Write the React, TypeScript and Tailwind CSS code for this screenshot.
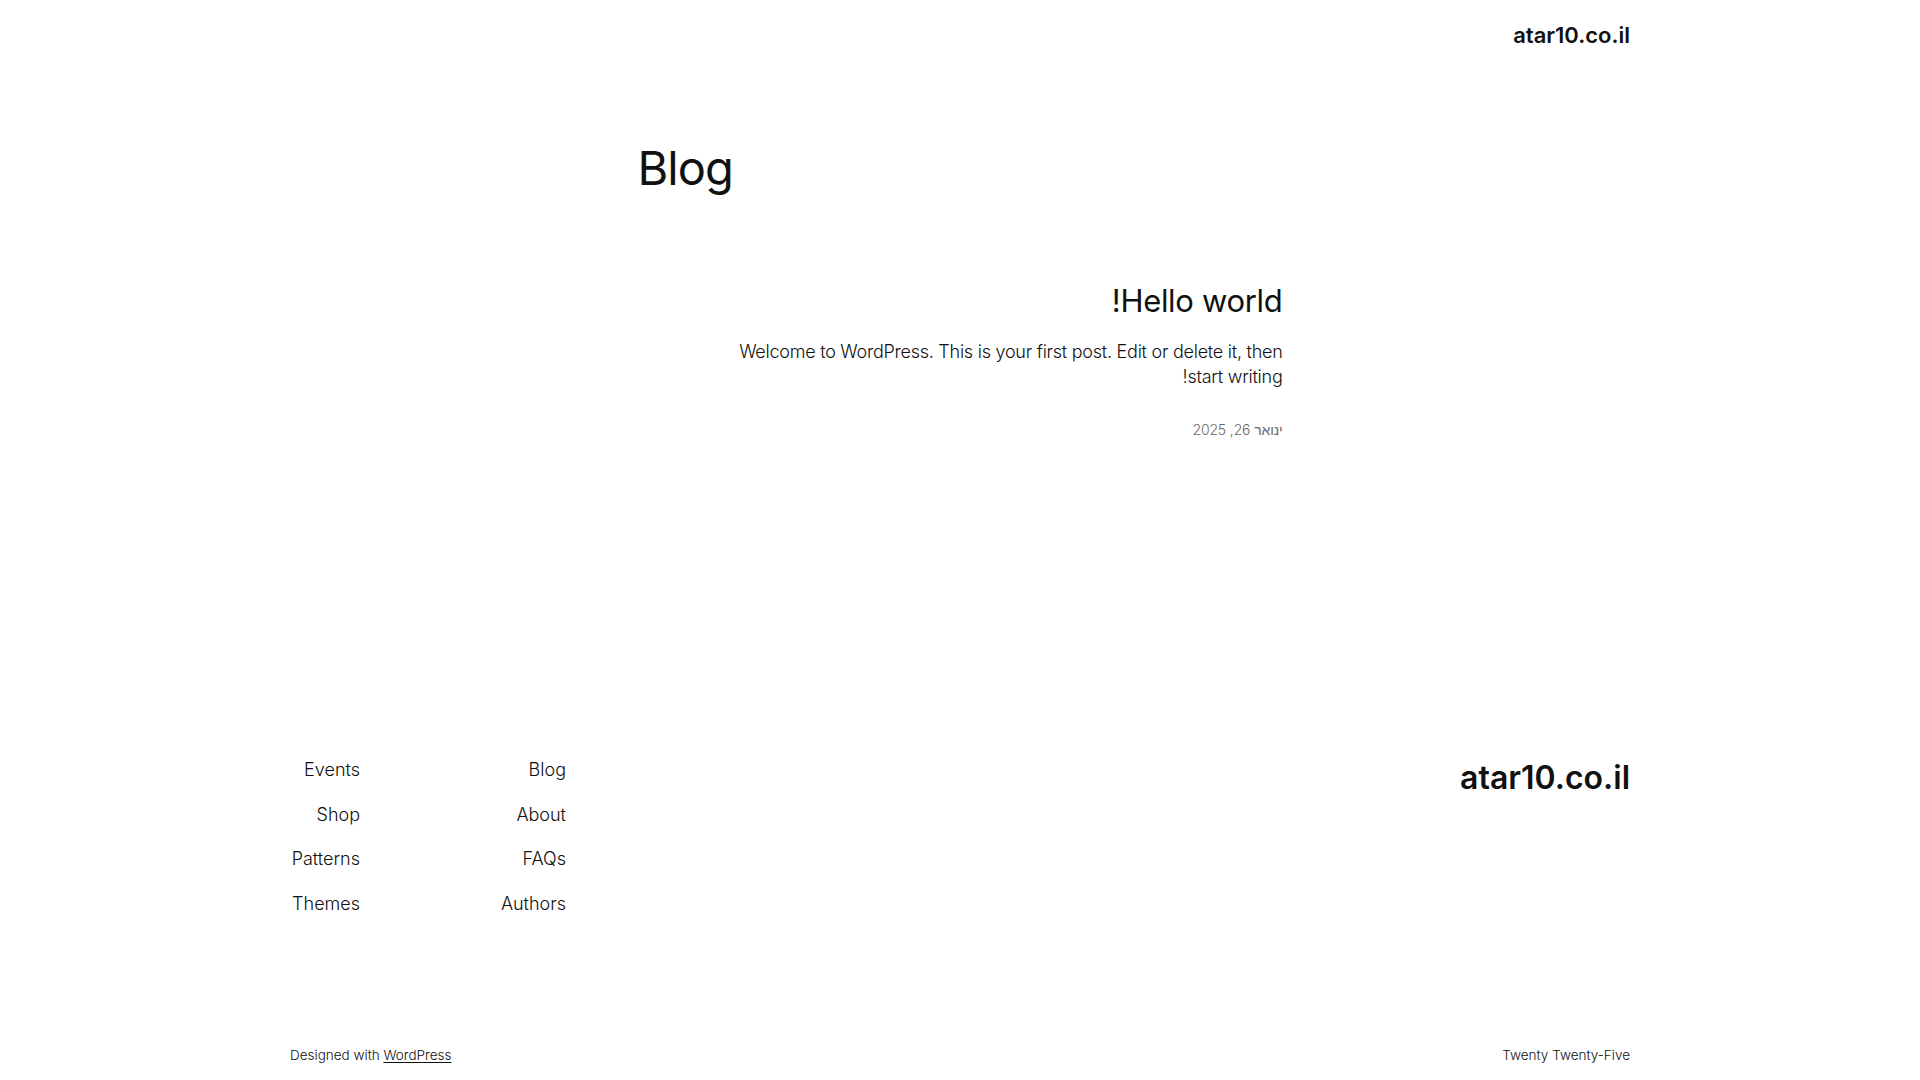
const navRight = ["Blog", "About", "FAQs", "Authors"];
const navLeft = ["Events", "Shop", "Patterns", "Themes"];

function NavColumn({ items, width }: { items: string[]; width: string }) {
  return (
    <ul className={`flex flex-col gap-[20.5px] ${width}`}>
      {items.map((item) => (
        <li key={item} className="text-[18px] leading-[24px] font-light whitespace-nowrap">
          <a href="#">{item}</a>
        </li>
      ))}
    </ul>
  );
}

export default function App() {
  return (
    <div
      dir="rtl"
      className="min-h-screen bg-white text-[#111111]"
      style={{ fontFamily: "Inter, 'Noto Sans', sans-serif" }}
    >
      <header className="mx-auto flex w-[1340px] justify-between pt-[21px]">
        <a href="#" className="text-[22px] leading-[28px] font-semibold">
          atar10.co.il
        </a>
      </header>

      <main className="mx-auto w-[645px]">
        <h1 className="mt-[90px] text-left text-[47px] leading-[58px] font-normal tracking-[-0.02em]">
          Blog
        </h1>

        <article className="mt-[85px]">
          <h2 className="text-[31px] leading-[38px] font-normal tracking-[-0.01em]">
            <a href="#">Hello world!</a>
          </h2>
          <p className="mt-[19px] text-[18px] leading-[25px] font-light tracking-[-0.014em]">
            Welcome to WordPress. This is your first post. Edit or delete it, then
            <br />
            start writing!
          </p>
          <time className="mt-[30px] block text-[14px] leading-[21px] font-light tracking-[-0.01em] text-[#686868]">
            ינואר 26, 2025
          </time>
        </article>
      </main>

      <footer className="mx-auto mt-[319px] w-[1340px] pb-[16px]">
        <div className="flex items-start justify-between">
          <a href="#" className="text-[32px] leading-[38px] font-semibold">
            atar10.co.il
          </a>
          <nav className="-mt-[1px] flex gap-[140px]">
            <NavColumn items={navRight} width="w-[66px]" />
            <NavColumn items={navLeft} width="w-[70px]" />
          </nav>
        </div>
        <div className="mt-[129px] flex justify-between text-[13.5px] leading-[20px] font-light">
          <p>Twenty Twenty-Five</p>
          <p dir="ltr">
            Designed with{" "}
            <a href="#" className="underline underline-offset-2">
              WordPress
            </a>
          </p>
        </div>
      </footer>
    </div>
  );
}
